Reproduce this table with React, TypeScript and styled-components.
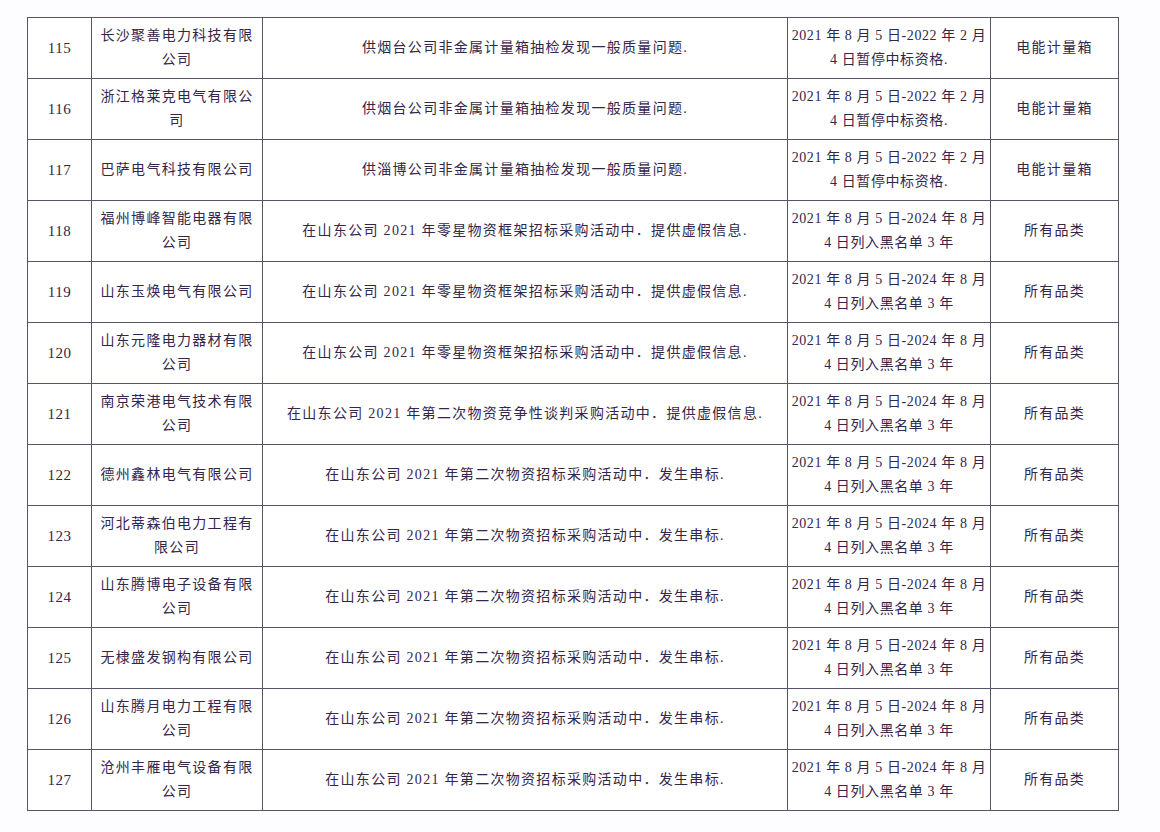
import React from "react";
import styled, { createGlobalStyle } from "styled-components";

const Global = createGlobalStyle`
  html, body {
    margin: 0;
    padding: 0;
    background: #fcfcfe;
  }
  body {
    font-family: "Liberation Serif", "Noto Sans CJK SC", serif;
    color: #34264a;
  }
`;

const Page = styled.div`
  width: 1160px;
  height: 832px;
  box-sizing: border-box;
  padding: 17px 0 0 27px;
  background: #fdfdff;
  overflow: hidden;
`;

const Table = styled.table`
  width: 1091px;
  table-layout: fixed;
  border-collapse: collapse;
  border: 1.5px solid #505064;
  background: #ffffff;
`;

const Row = styled.tr`
  height: 61px;
`;

const Cell = styled.td<{ $tight?: boolean }>`
  border: 1.5px solid #56566a;
  padding: 0;
  vertical-align: middle;
  text-align: center;
  font-size: 14px;
  letter-spacing: ${(p) => (p.$tight ? "0.6px" : "1.3px")};
  line-height: 24px;
  color: #34264a;
  overflow: visible;
`;

const Lines = styled.div`
  display: flex;
  flex-direction: column;
  align-items: center;
  white-space: nowrap;
`;

const Num = styled.span`
  font-size: 15px;
  letter-spacing: 0.5px;
`;

type Item = {
  no: number;
  company: string[];
  desc: string;
  date: string[];
  cat: string;
};

const meter = ["2021 年 8 月 5 日-2022 年 2 月", "4 日暂停中标资格."];
const black = ["2021 年 8 月 5 日-2024 年 8 月", "4 日列入黑名单 3 年"];
const d1 = "供烟台公司非金属计量箱抽检发现一般质量问题.";
const d2 = "供淄博公司非金属计量箱抽检发现一般质量问题.";
const d3 = "在山东公司 2021 年零星物资框架招标采购活动中．提供虚假信息.";
const d4 = "在山东公司 2021 年第二次物资竞争性谈判采购活动中．提供虚假信息.";
const d5 = "在山东公司 2021 年第二次物资招标采购活动中．发生串标.";

const items: Item[] = [
  { no: 115, company: ["长沙聚善电力科技有限", "公司"], desc: d1, date: meter, cat: "电能计量箱" },
  { no: 116, company: ["浙江格莱克电气有限公", "司"], desc: d1, date: meter, cat: "电能计量箱" },
  { no: 117, company: ["巴萨电气科技有限公司"], desc: d2, date: meter, cat: "电能计量箱" },
  { no: 118, company: ["福州博峰智能电器有限", "公司"], desc: d3, date: black, cat: "所有品类" },
  { no: 119, company: ["山东玉焕电气有限公司"], desc: d3, date: black, cat: "所有品类" },
  { no: 120, company: ["山东元隆电力器材有限", "公司"], desc: d3, date: black, cat: "所有品类" },
  { no: 121, company: ["南京荣港电气技术有限", "公司"], desc: d4, date: black, cat: "所有品类" },
  { no: 122, company: ["德州鑫林电气有限公司"], desc: d5, date: black, cat: "所有品类" },
  { no: 123, company: ["河北蒂森伯电力工程有", "限公司"], desc: d5, date: black, cat: "所有品类" },
  { no: 124, company: ["山东腾博电子设备有限", "公司"], desc: d5, date: black, cat: "所有品类" },
  { no: 125, company: ["无棣盛发钢构有限公司"], desc: d5, date: black, cat: "所有品类" },
  { no: 126, company: ["山东腾月电力工程有限", "公司"], desc: d5, date: black, cat: "所有品类" },
  { no: 127, company: ["沧州丰雁电气设备有限", "公司"], desc: d5, date: black, cat: "所有品类" },
];

const widths = [64, 171, 525, 203, 128];

export default function App() {
  return (
    <Page>
      <Global />
      <Table>
        <colgroup>
          {widths.map((w, i) => (
            <col key={i} style={{ width: w }} />
          ))}
        </colgroup>
        <tbody>
          {items.map((it) => (
            <Row key={it.no}>
              <Cell>
                <Num>{it.no}</Num>
              </Cell>
              <Cell>
                <Lines>
                  {it.company.map((l, i) => (
                    <span key={i}>{l}</span>
                  ))}
                </Lines>
              </Cell>
              <Cell>
                <Lines>
                  <span>{it.desc}</span>
                </Lines>
              </Cell>
              <Cell $tight>
                <Lines>
                  {it.date.map((l, i) => (
                    <span key={i}>{l}</span>
                  ))}
                </Lines>
              </Cell>
              <Cell>
                <Lines>
                  <span>{it.cat}</span>
                </Lines>
              </Cell>
            </Row>
          ))}
        </tbody>
      </Table>
    </Page>
  );
}
